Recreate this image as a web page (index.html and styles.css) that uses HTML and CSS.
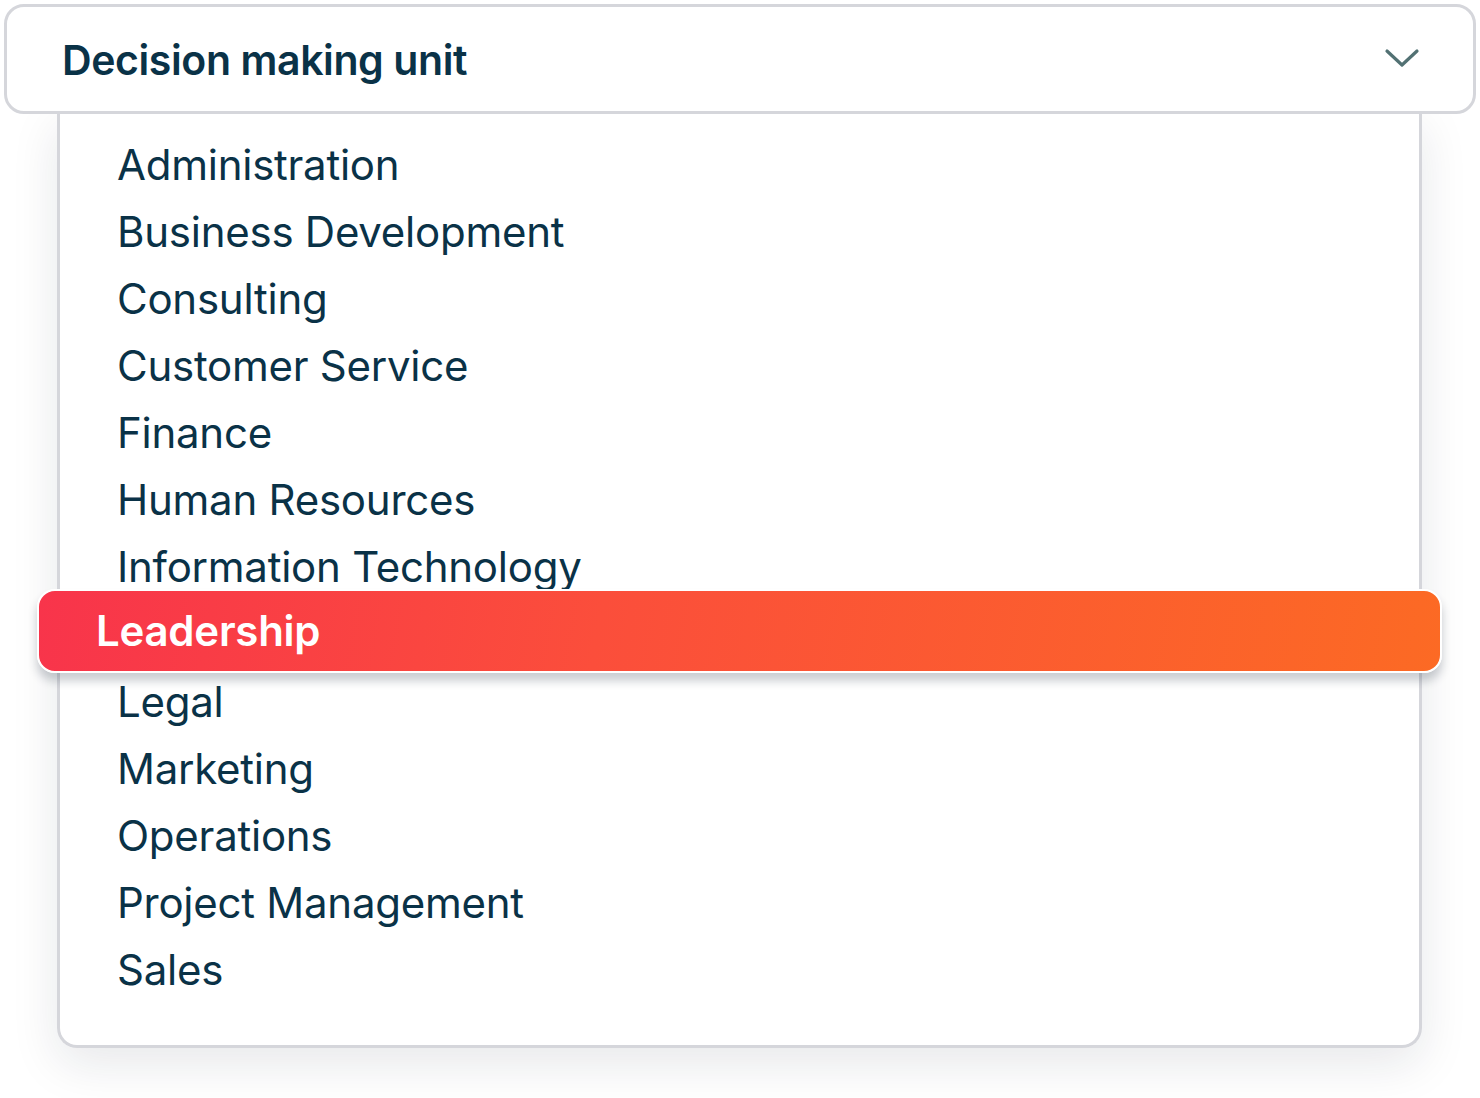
FILE: index.html
```html
<!DOCTYPE html>
<html lang="en">
<head>
	<meta charset="UTF-8">
	<title>Decision making unit</title>
	<link rel="stylesheet" href="styles.css">
</head>
<body>
	<div class="dropdown">
		<div class="selectHeader">
			<span class="selectTitle">Decision making unit</span>
			<svg class="chevron" width="36" height="24" viewBox="0 0 36 24">
				<path d="M3 5 L18 19 L33 5" fill="none" stroke="#527173" stroke-width="3.2" stroke-linecap="round" stroke-linejoin="round"/>
			</svg>
		</div>
		<ul class="optionList">
			<li>Administration</li>
			<li>Business Development</li>
			<li>Consulting</li>
			<li>Customer Service</li>
			<li>Finance</li>
			<li>Human Resources</li>
			<li>Information Technology</li>
			<li class="selected">Leadership</li>
			<li>Legal</li>
			<li>Marketing</li>
			<li>Operations</li>
			<li>Project Management</li>
			<li>Sales</li>
		</ul>
	</div>
</body>
</html>
```

FILE: styles.css
```css
body {
	margin: 0px;
	background-color: #ffffff;
	font-family: Inter, "Noto Sans", sans-serif;
	color: #0a3247;
}
.dropdown{
	padding: 4px 4px 60px 4px;
}
.selectHeader{
	position: relative;
	z-index: 2;
	display: flex;
	align-items: center;
	justify-content: space-between;
	height: 104px;
	padding: 0px 53px 0px 55px;
	border: 3px solid #d5d6db;
	border-radius: 20px;
	background-color: #ffffff;
}
.selectTitle{
	font-size: 41px;
	font-weight: 600;
	letter-spacing: -0.4px;
	margin-top: 2px;
}
.chevron{
	margin-top: -2px;
}
.optionList{
	list-style: none;
	margin: -3px 54px 0px 53px;
	padding: 20px 0px 42px 0px;
	border: 3px solid #d5d6db;
	border-top: none;
	border-radius: 0px 0px 20px 20px;
	box-shadow: 0px 16px 48px rgba(20, 30, 50, 0.1);
}
.optionList li{
	height: 67px;
	line-height: 67px;
	padding-left: 57px;
	font-size: 42px;
	letter-spacing: -0.25px;
}
.optionList li.selected{
	position: relative;
	height: 80px;
	line-height: 80px;
	margin: -11px -23px -5px -23px;
	padding-left: 57px;
	border: 2px solid #ffffff;
	border-radius: 18px;
	background: linear-gradient(100deg, #f8344b 0%, #fb4e3b 40%, #fc6a24 100%);
	box-shadow: 0px 8px 10px rgba(20, 30, 50, 0.22);
	color: #ffffff;
	font-weight: 600;
}
```
